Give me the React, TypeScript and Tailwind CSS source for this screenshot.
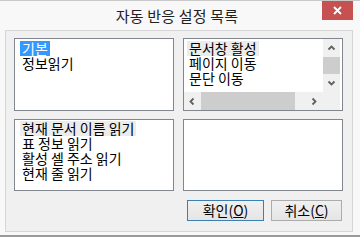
import { ReactNode } from 'react';

const font = { fontFamily: '"Noto Sans CJK KR", "Liberation Sans", sans-serif' };

const Chevron = ({ dir }: { dir: 'up' | 'down' | 'left' | 'right' }) => {
  const paths: Record<string, string> = {
    up: 'M1.5 5.5 L4.5 2.5 L7.5 5.5',
    down: 'M1.5 2.5 L4.5 5.5 L7.5 2.5',
    left: 'M5.5 1.5 L2.5 4.5 L5.5 7.5',
    right: 'M2.5 1.5 L5.5 4.5 L2.5 7.5',
  };
  return (
    <svg width="9" height="9" viewBox="0 0 9 9">
      <path d={paths[dir]} fill="none" stroke="#606060" strokeWidth="1.8" />
    </svg>
  );
};

const Item = ({ children, selected, active }: { children: ReactNode; selected?: boolean; active?: boolean }) => (
  <div className="h-[15px] leading-[15px] flex">
    <span
      className={`px-[2px] whitespace-nowrap ${
        selected ? (active ? 'bg-[#3399ff] text-white' : 'bg-[#ececec] text-black') : 'text-black'
      }`}
    >
      {children}
    </span>
  </div>
);

const DialogButton = ({ label, mnemonic, focused, width }: { label: string; mnemonic: string; focused?: boolean; width: string }) => (
  <button
    className={`${width} h-[21px] border ${
      focused ? 'border-[#3c7fb1]' : 'border-[#acacac]'
    } bg-gradient-to-b from-[#f0f0f0] to-[#e5e5e5] text-[14px] leading-[19px] text-black`}
  >
    {label}(<span className="underline">{mnemonic}</span>)
  </button>
);

export default function App() {
  return (
    <div
      className="w-[360px] h-[237px] bg-[#f8f8f8] border-t border-[#c9c9c9] border-b-2 border-b-[#9a9a9a] flex flex-col"
      style={font}
    >
      {/* title bar */}
      <div className="h-[29px] grid grid-cols-[1fr_auto_1fr] items-start">
        <div />
        <div className="pt-[5px] pr-[6px] text-[15px] leading-[20px] text-[#222] tracking-[0.2px]">
          자동 반응 설정 목록
        </div>
        <div className="flex justify-end pr-[7px]">
          <div className="w-[31px] h-[19px] bg-[#c75050] flex items-center justify-center">
            <svg width="9" height="9" viewBox="0 0 9 9">
              <path d="M1 1 L8 8 M8 1 L1 8" stroke="#fff" strokeWidth="1.8" />
            </svg>
          </div>
        </div>
      </div>

      {/* client panel */}
      <div className="ml-[5px] w-[348px] h-[202px] bg-[#f0f0f0] border border-[#d6d6d6] pt-[7px] pl-[8px] pr-[9px] flex flex-col">
        <div className="flex gap-[9px]">
          {/* category list */}
          <div className="w-[160px] h-[73px] bg-white border border-[#82878f] pt-[2px] pl-[5px] text-[14px]">
            <Item selected active>기본</Item>
            <Item>정보읽기</Item>
          </div>

          {/* command list with scrollbars */}
          <div className="w-[160px] h-[73px] bg-white border border-[#82878f] flex flex-col text-[14px]">
            <div className="flex h-[53px]">
              <div className="w-[139px] pt-[2px] pl-[3px] overflow-hidden">
                <Item selected>문서창 활성</Item>
                <Item>페이지 이동</Item>
                <Item>문단 이동</Item>
              </div>
              <div className="w-[17px] bg-[#f0f0f0] flex flex-col">
                <div className="h-[18px] flex items-center justify-center">
                  <Chevron dir="up" />
                </div>
                <div className="h-[17px] bg-[#cdcdcd]" />
                <div className="flex-1 flex items-end justify-center pb-[4px]">
                  <Chevron dir="down" />
                </div>
              </div>
            </div>
            <div className="flex h-[18px]">
              <div className="w-[139px] bg-[#f0f0f0] flex items-center">
                <div className="w-[17px] flex items-center justify-center">
                  <Chevron dir="left" />
                </div>
                <div className="w-[94px] h-full bg-[#cdcdcd]" />
                <div className="flex-1 flex items-center justify-end pr-[4px]">
                  <Chevron dir="right" />
                </div>
              </div>
              <div className="w-[17px] bg-[#f0f0f0]" />
            </div>
          </div>
        </div>

        <div className="flex gap-[9px] mt-[8px]">
          {/* key list */}
          <div className="w-[160px] h-[72px] bg-white border border-[#82878f] pt-[1px] pl-[5px] text-[14px]">
            <Item selected>현재 문서 이름 읽기</Item>
            <Item>표 정보 읽기</Item>
            <Item>활성 셀 주소 읽기</Item>
            <Item>현재 줄 읽기</Item>
          </div>
          <div className="w-[160px] h-[72px] bg-white border border-[#82878f]" />
        </div>

        <div className="flex justify-end gap-[7px] mt-[9px] pr-[1px]">
          <DialogButton label="확인" mnemonic="O" focused width="w-[77px]" />
          <DialogButton label="취소" mnemonic="C" width="w-[71px]" />
        </div>
      </div>
    </div>
  );
}
